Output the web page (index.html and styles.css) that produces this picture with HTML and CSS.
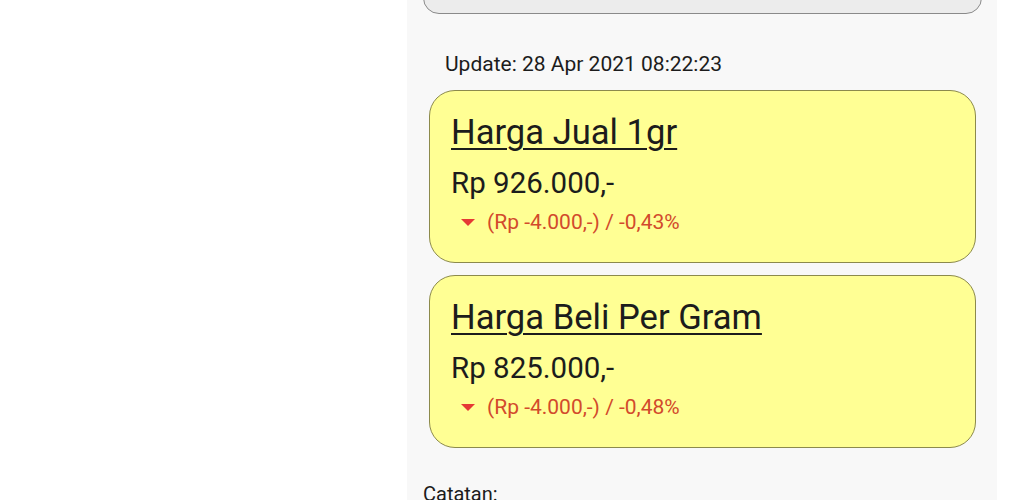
FILE: index.html
```html
<!DOCTYPE html>
<html lang="id">

<head>
    <meta charset="UTF-8">
    <meta name="viewport" content="width=device-width, initial-scale=1.0">
    <title>Harga Emas</title>
    <link rel="stylesheet" href="styles.css">
</head>

<body>
    <div class="page">
        <div class="side"></div>

        <div class="panel">
            <!-- Box above (scrolled off) -->
            <div class="top-box"></div>

            <p class="update">Update: 28 Apr 2021 08:22:23</p>

            <div class="card">
                <h2 class="card-title">Harga Jual 1gr</h2>
                <div class="price">Rp 926.000,-</div>
                <div class="change"><span class="arrow"></span>(Rp -4.000,-) / -0,43%</div>
            </div>

            <div class="card">
                <h2 class="card-title">Harga Beli Per Gram</h2>
                <div class="price">Rp 825.000,-</div>
                <div class="change"><span class="arrow"></span>(Rp -4.000,-) / -0,48%</div>
            </div>

            <p class="note">Catatan:</p>
        </div>
    </div>
</body>

</html>
```

FILE: styles.css
```css
body {
    margin: 0;
    font-family: Roboto, 'Noto Sans', sans-serif;
    color: #1c1c1c;
    background: #fff;
    overflow: hidden;
}

.page {
    display: flex;
    height: 500px;
}

.side {
    width: 407px;
    flex-shrink: 0;
}

.panel {
    width: 590px;
    background-color: #f8f8f8;
    padding: 0 15px 0 16px;
    box-sizing: border-box;
}

.top-box {
    height: 40px;
    margin-top: -28px;
    background-color: #ececec;
    border: 1px solid #8a8a8a;
    border-radius: 16px;
}

.update {
    margin: 38px 0 14px 22px;
    font-size: 21px;
    line-height: 24px;
}

.card {
    margin: 12px 6px;
    height: 173px;
    box-sizing: border-box;
    padding: 17px 21px 0;
    background-color: #ffff94;
    border: 1px solid #8c8a4c;
    border-radius: 26px;
}

.card-title {
    margin: 0;
    font-size: 34.6px;
    font-weight: normal;
    line-height: 48px;
    text-decoration: underline;
    text-decoration-thickness: 2px;
    text-underline-offset: 4px;
}

.price {
    font-size: 29.5px;
    line-height: 54px;
}

.change {
    font-size: 21px;
    line-height: 24px;
    color: #d24a2c;
    display: flex;
    align-items: center;
}

.arrow {
    width: 0;
    height: 0;
    margin: 0 12px 0 10px;
    border-left: 7px solid transparent;
    border-right: 7px solid transparent;
    border-top: 7px solid #e53935;
}

.note {
    margin: 34px 0 0 0;
    font-size: 20px;
}
```
